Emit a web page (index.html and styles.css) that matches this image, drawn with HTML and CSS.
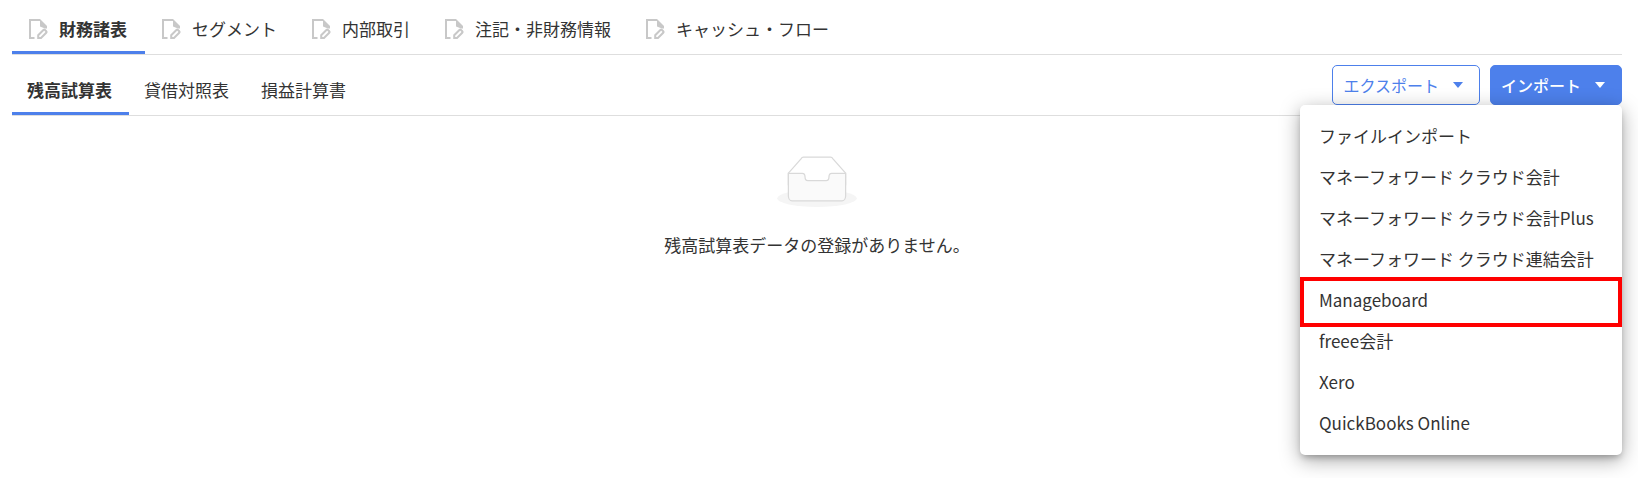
FILE: index.html
```html
<!DOCTYPE html>
<html lang="ja">
  <head>
    <meta charset="UTF-8" />
    <meta name="viewport" content="width=device-width, initial-scale=1.0" />
    <title>財務諸表</title>
    <link rel="stylesheet" href="styles.css">
  </head>
  <body>
    <svg class="defs" aria-hidden="true">
      <symbol id="icon-doc" viewBox="0 0 20 20">
        <path d="M6.500 19H2V1h10" fill="none" stroke="currentColor" stroke-width="2" />
        <path d="M12 0l7 7v2.500h-2L12 7.500z" fill="currentColor" />
        <path d="M10.200 19v-2.800l5.200-5.200q.8-.7 1.600 0l1.200 1.200q.7.800 0 1.600L13 19z" fill="none" stroke="currentColor" stroke-width="2" />
      </symbol>
    </svg>

    <nav class="tabs">
      <a class="tab active" href="#"><svg class="icon"><use href="#icon-doc" /></svg>財務諸表</a>
      <a class="tab" href="#"><svg class="icon"><use href="#icon-doc" /></svg>セグメント</a>
      <a class="tab" href="#"><svg class="icon"><use href="#icon-doc" /></svg>内部取引</a>
      <a class="tab" href="#"><svg class="icon"><use href="#icon-doc" /></svg>注記・非財務情報</a>
      <a class="tab" href="#"><svg class="icon"><use href="#icon-doc" /></svg>キャッシュ・フロー</a>
    </nav>

    <div class="sub-header">
      <nav class="sub-tabs">
        <a class="tab active" href="#">残高試算表</a>
        <a class="tab" href="#">貸借対照表</a>
        <a class="tab" href="#">損益計算書</a>
      </nav>

      <div class="actions">
        <button class="btn" type="button">エクスポート<span class="caret"></span></button>
        <div class="dropdown">
          <button class="btn btn-primary" type="button" aria-expanded="true">インポート<span class="caret"></span></button>
          <ul class="menu">
            <li><a href="#">ファイルインポート</a></li>
            <li><a href="#">マネーフォワード クラウド会計</a></li>
            <li><a href="#">マネーフォワード クラウド会計Plus</a></li>
            <li><a href="#">マネーフォワード クラウド連結会計</a></li>
            <li class="marked"><a href="#">Manageboard</a></li>
            <li><a href="#">freee会計</a></li>
            <li><a href="#">Xero</a></li>
            <li><a href="#">QuickBooks Online</a></li>
          </ul>
        </div>
      </div>
    </div>

    <main class="empty">
      <svg class="empty-image" viewBox="0 0 64 41" aria-hidden="true">
        <g transform="translate(0 1)">
          <ellipse fill="#f5f5f5" cx="32" cy="33" rx="32" ry="7" />
          <g stroke="#d9d9d9">
            <path fill="#fff" d="M55 12.760L44.854 1.258C44.367.474 43.656 0 42.907 0H21.093c-.749 0-1.460.474-1.947 1.257L9 12.761V22h46v-9.240z" />
            <path fill="#fafafa" d="M41.613 15.931c0-1.605.994-2.930 2.227-2.931H55v18.137C55 33.260 53.680 35 52.050 35h-40.100C10.320 35 9 33.259 9 31.137V13h11.160c1.233 0 2.227 1.323 2.227 2.928v.022c0 1.605 1.005 2.901 2.237 2.901h14.752c1.232 0 2.237-1.308 2.237-2.913v-.007z" />
          </g>
        </g>
      </svg>
      <p>残高試算表データの登録がありません。</p>
    </main>
  </body>
</html>
```
FILE: styles.css
```css
body {
  box-sizing: border-box;
  min-height: 100vh;
  margin: 0;
  padding: 0 16px 0 12px;
  background-color: #fff;
  color: #333;
  font-family: "Noto Sans CJK JP", sans-serif;
  font-size: 17px;
  line-height: 24px;
}
a {
  color: inherit;
  text-decoration: none;
}
.defs {
  display: none;
}
.tabs,
.sub-header {
  display: flex;
  border-bottom: 1px solid #dedede;
}
.sub-tabs {
  display: flex;
}
.tab {
  display: flex;
  align-items: center;
  padding: 17px 18px 10px 16px;
  border-bottom: 3px solid transparent;
  white-space: nowrap;
}
.sub-tabs .tab {
  padding: 23px 17px 10px 15px;
}
.tab.active {
  border-bottom-color: #4d80eb;
  font-weight: bold;
}
.icon {
  width: 20px;
  height: 20px;
  margin-right: 11px;
  color: #c8c8c8;
}
.sub-header {
  justify-content: space-between;
}
.actions {
  display: flex;
  align-items: center;
  gap: 10px;
}
.btn {
  display: flex;
  align-items: center;
  gap: 14px;
  height: 40px;
  padding: 0 16px 0 10px;
  border: 1px solid #4d80eb;
  border-radius: 5px;
  background-color: #fff;
  color: #4d80eb;
  font-family: inherit;
  font-size: 16px;
  white-space: nowrap;
  cursor: pointer;
}
.btn-primary {
  background-color: #4d80eb;
  color: #fff;
  font-weight: 500;
}
.caret {
  border: 5px solid transparent;
  border-top: 6px solid currentColor;
  border-bottom: 0;
}
.dropdown {
  position: relative;
}
.menu {
  position: absolute;
  top: 100%;
  right: 0;
  box-sizing: border-box;
  min-width: 322px;
  margin: 0;
  padding: 10px 0 12px;
  border-radius: 5px;
  background-color: #fff;
  list-style: none;
  box-shadow: 0 5px 20px rgba(0, 0, 0, 0.35),
    0 4px 6px -2px rgba(0, 0, 0, 0.25);
}
.menu li {
  position: relative;
}
.menu a {
  display: block;
  padding: 0 19px;
  line-height: 41px;
  white-space: nowrap;
}
.marked::after {
  content: "";
  position: absolute;
  inset: -2px 0 -7px;
  border: 4px solid #f00;
  pointer-events: none;
}
.empty {
  padding: 40px 0;
  text-align: center;
}
.empty-image {
  display: block;
  width: 80px;
  height: 51px;
  margin: 0 auto;
}
.empty p {
  margin: 26px 0 0;
}
```
